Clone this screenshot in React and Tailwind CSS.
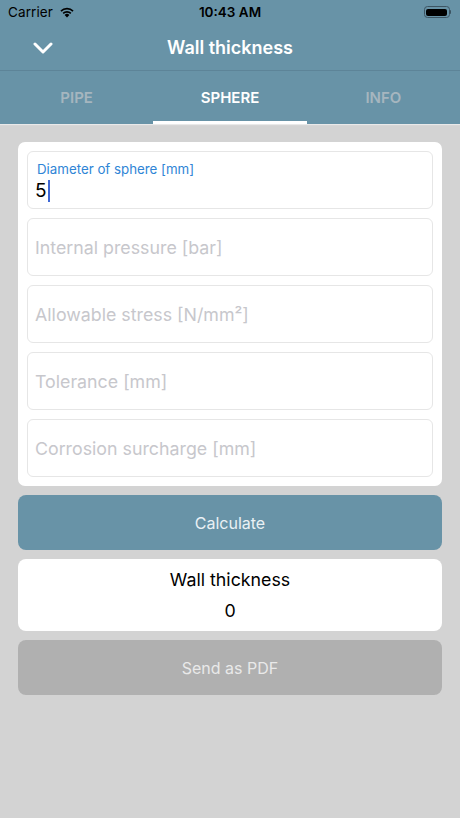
import React from "react";

function Field({ label, value, placeholder }) {
  return (
    <div className="h-[58px] rounded-[6px] border border-[#e6e6e6] bg-white px-[7px] flex flex-col justify-center">
      {label ? (
        <div className="pt-[4px]">
          <div className="text-[13.3px] leading-[16px] text-[#2f85d6] pl-[2px]">{label}</div>
          <div className="flex items-center h-[24px] mt-[2px]">
            <span className="text-[19px] leading-[24px] text-black">{value}</span>
            <span className="ml-[1px] w-[2px] h-[22px] bg-[#3e68d6]" />
          </div>
        </div>
      ) : (
        <div className="text-[17.8px] leading-[24px] text-[#c7c7cc] pt-[1px]">{placeholder}</div>
      )}
    </div>
  );
}

export default function App() {
  return (
    <div
      className="w-[460px] h-[818px] bg-[#d3d3d3] flex flex-col"
      style={{ fontFamily: "Inter, 'Noto Sans', sans-serif" }}
    >
      <div className="bg-[#6893a7] shadow-[0_1px_1px_rgba(255,255,255,0.5)]">
        {/* status bar */}
        <div className="h-[24px] flex items-center px-[8px] relative">
          <div className="flex items-center gap-[6px]">
            <span className="text-[13.5px] text-black tracking-[0.1px]">Carrier</span>
            <svg width="16" height="12" viewBox="0 0 16 12">
              <path d="M8 11.5 L5.6 8.9 A3.5 3.5 0 0 1 10.4 8.9 Z" fill="#000" />
              <path d="M3.6 6.8 A6.3 6.3 0 0 1 12.4 6.8 L11.3 8 A4.7 4.7 0 0 0 4.7 8 Z" fill="#000" />
              <path d="M1.4 4.6 A9.3 9.3 0 0 1 14.6 4.6 L13.5 5.8 A7.7 7.7 0 0 0 2.5 5.8 Z" fill="#000" />
            </svg>
          </div>
          <div className="absolute left-0 right-0 text-center text-[13.5px] font-semibold text-black">10:43 AM</div>
          <div className="ml-auto flex items-center mr-[1px]">
            <div className="w-[26px] h-[12px] rounded-[3.5px] border border-[#3d5563] p-[1.5px]">
              <div className="w-full h-full rounded-[2px] bg-black" />
            </div>
            <div className="w-[1.5px] h-[4px] bg-[#3d5563] rounded-r-[1px]" />
          </div>
        </div>
        {/* nav bar */}
        <div className="h-[47px] flex items-center relative border-b border-[#5d8498]">
          <div className="pl-[33px] pt-[2px]">
            <svg width="20" height="12" viewBox="0 0 20 12">
              <path d="M2 2 L10 10 L18 2" stroke="#fff" strokeWidth="3" fill="none" strokeLinecap="round" strokeLinejoin="round" />
            </svg>
          </div>
          <div className="absolute left-0 right-0 text-center text-[18px] font-semibold text-white">Wall thickness</div>
        </div>
        {/* tabs */}
        <div className="h-[53px] grid grid-cols-3">
          <div className="flex items-center justify-center text-[15px] font-semibold text-[#a6b6bf] pt-[2px]">PIPE</div>
          <div className="flex flex-col">
            <div className="flex-1 flex items-center justify-center text-[15px] font-semibold text-white pt-[4px]">SPHERE</div>
            <div className="h-[3px] bg-white" />
          </div>
          <div className="flex items-center justify-center text-[15px] font-semibold text-[#a6b6bf] pt-[2px]">INFO</div>
        </div>
      </div>

      <div className="px-[18px] pt-[18px] flex flex-col gap-[9px]">
        <div className="bg-white rounded-[7px] p-[9px] flex flex-col gap-[9px]">
          <Field label="Diameter of sphere [mm]" value="5" />
          <Field placeholder="Internal pressure [bar]" />
          <Field placeholder="Allowable stress [N/mm²]" />
          <Field placeholder="Tolerance [mm]" />
          <Field placeholder="Corrosion surcharge [mm]" />
        </div>
        <div className="h-[55px] rounded-[8px] bg-[#6893a7] flex items-center justify-center text-[16px] text-[#eaf1f5] pt-[1px]">
          Calculate
        </div>
        <div className="h-[72px] rounded-[8px] bg-white flex flex-col items-center justify-center gap-[9px]">
          <div className="text-[17.8px] leading-[22px] text-black">Wall thickness</div>
          <div className="text-[17.8px] leading-[22px] text-black">0</div>
        </div>
        <div className="h-[55px] rounded-[8px] bg-[#b0b0b0] flex items-center justify-center text-[16px] text-[#e9e9e9] pt-[1px]">
          Send as PDF
        </div>
      </div>
    </div>
  );
}
